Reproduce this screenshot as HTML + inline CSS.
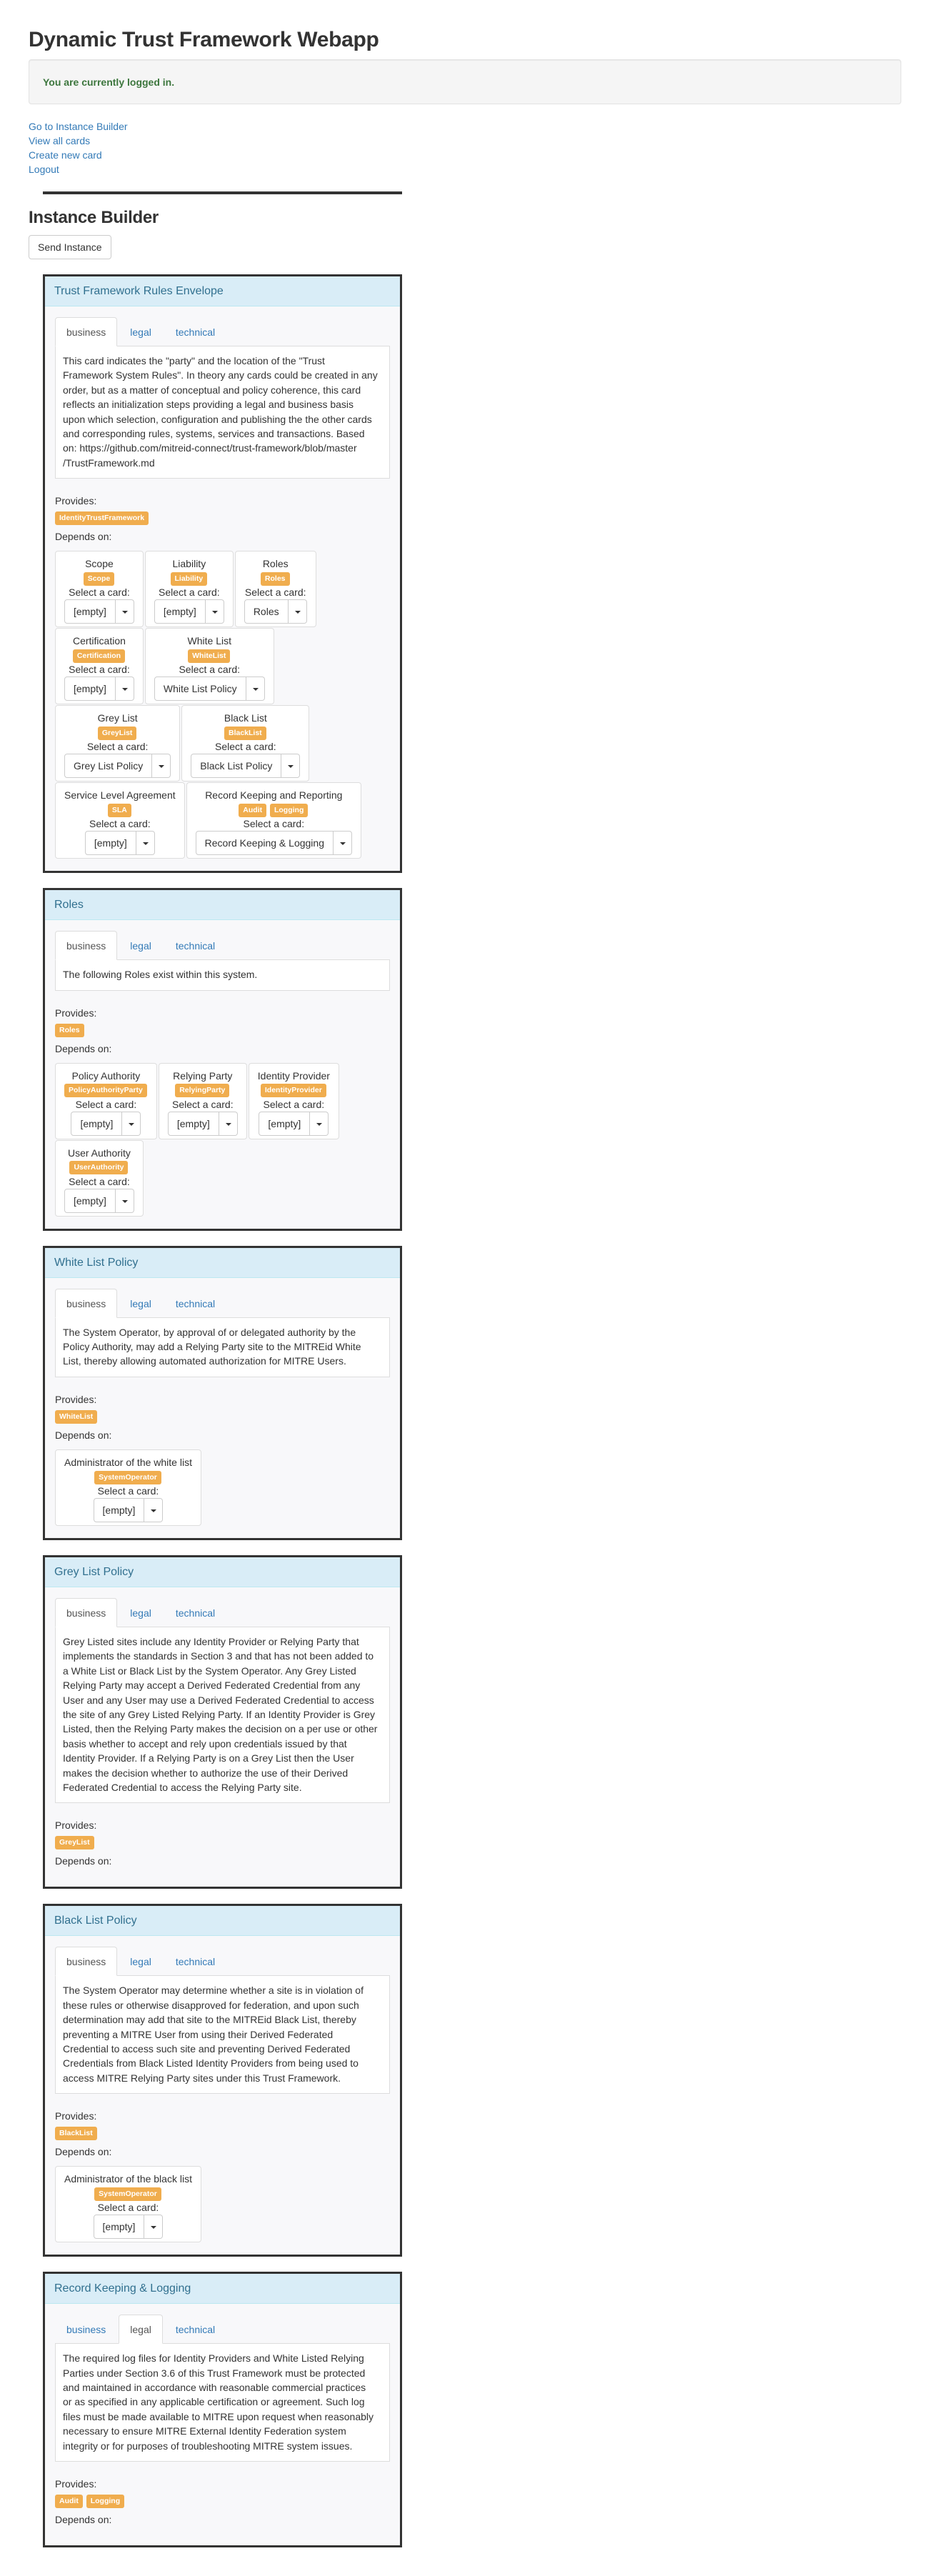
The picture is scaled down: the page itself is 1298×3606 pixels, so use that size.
<!DOCTYPE html>
<html><head><meta charset="utf-8">
<style>
*{box-sizing:border-box;}
html,body{margin:0;padding:0;background:#fff;}
body{font-family:"Liberation Sans",Arial,sans-serif;font-size:14px;line-height:20px;color:#333;width:1298px;height:3567px;overflow:hidden;}
.wrap{padding-left:40px;padding-right:36px;}
h1{font-size:30px;font-weight:bold;line-height:33px;margin:39px 0 11px;color:#333;letter-spacing:-0.3px;}
.well{background:#f5f5f5;border:1px solid #e3e3e3;border-radius:4px;height:63px;padding:21px 19px;box-shadow:inset 0 1px 1px rgba(0,0,0,.05);}
.well b{color:#3c763d;}
.links{margin-top:21px;}
.links a{display:block;color:#337ab7;text-decoration:none;line-height:20px;}
.hr{margin:21px 0 0 20px;width:503px;height:4px;background:#333;}
h3{font-size:24px;font-weight:bold;line-height:26px;margin:20px 0 11px;letter-spacing:-0.3px;}
.btn{display:inline-block;height:34px;border:1px solid #ccc;border-radius:4px;background:#fff;padding:6px 12px;line-height:20px;color:#333;font-size:14px;}
.panel{margin:21px 0 0 20px;width:503px;border:3px solid #333;background:#f8f8fa;}
.ph{background:#d9edf7;border-bottom:1px solid #bce8f1;height:42px;padding:12px 13px;color:#31708f;font-size:16px;line-height:18px;}
.pb{padding:15px 14px 16px 14px;}
.tabs{height:41px;border-bottom:1px solid #ddd;display:flex;}
.tabs span{display:block;height:41px;padding:10px 15px;margin-right:2px;color:#337ab7;border:1px solid transparent;border-radius:4px 4px 0 0;}
.tabs span.on{background:#fff;border-color:#ddd #ddd transparent;color:#555;}
.tc{background:#fff;border:1px solid #ddd;border-top:none;padding:10px 10px 11px 10px;white-space:nowrap;margin-bottom:21px;line-height:20.4px;}
.lbl{display:inline-block;background:#f0ad4e;color:#fff;font-weight:bold;font-size:10.5px;line-height:11px;padding:4px 6px 4px;border-radius:3px;margin-right:1px;}
.labels{height:23px;padding-top:2px;}
.dep{margin-top:7px;}
.deps{margin-top:10px;}
.row{display:flex;gap:2px;margin-bottom:1px;}
.box{background:#fff;border:1px solid #ddd;border-radius:4px;padding:7px 12px 6px;text-align:center;white-space:nowrap;height:107px;}
.box .t{line-height:20px;}
.box .l{height:20px;line-height:20px;}
.box .l .lbl{vertical-align:middle;}
.bg{display:inline-flex;height:34px;margin-top:0;}
.bg .a{border:1px solid #ccc;border-radius:4px 0 0 4px;padding:6px 12px;background:#fff;line-height:20px;}
.bg .c{border:1px solid #ccc;border-left:none;border-radius:0 4px 4px 0;width:26px;background:#fff;position:relative;}
.bg .c:after{content:"";position:absolute;left:9px;top:15px;border-top:4px solid #333;border-left:4px solid transparent;border-right:4px solid transparent;}
</style></head><body>
<div class="wrap">
<h1>Dynamic Trust Framework Webapp</h1>
<div class="well"><b>You are currently logged in.</b></div>
<div class="links">
<a>Go to Instance Builder</a><a>View all cards</a><a>Create new card</a><a>Logout</a>
</div>
<div class="hr"></div>
<h3>Instance Builder</h3>
<span class="btn">Send Instance</span>

<div class="panel">
<div class="ph">Trust Framework Rules Envelope</div>
<div class="pb">
<div class="tabs"><span class="on">business</span><span>legal</span><span>technical</span></div>
<div class="tc">This card indicates the "party" and the location of the "Trust<br>Framework System Rules". In theory any cards could be created in any<br>order, but as a matter of conceptual and policy coherence, this card<br>reflects an initialization steps providing a legal and business basis<br>upon which selection, configuration and publishing the the other cards<br>and corresponding rules, systems, services and transactions. Based<br>on: https://github.com/mitreid-connect/trust-framework/blob/master<br>/TrustFramework.md</div>
<div>Provides:</div>
<div class="labels"><span class="lbl">IdentityTrustFramework</span></div>
<div class="dep">Depends on:</div>
<div class="deps">
<div class="row">
<div class="box"><div class="t">Scope</div><div class="l"><span class="lbl">Scope</span></div><div class="t">Select a card:</div><div class="bg"><span class="a">[empty]</span><span class="c"></span></div></div>
<div class="box"><div class="t">Liability</div><div class="l"><span class="lbl">Liability</span></div><div class="t">Select a card:</div><div class="bg"><span class="a">[empty]</span><span class="c"></span></div></div>
<div class="box"><div class="t">Roles</div><div class="l"><span class="lbl">Roles</span></div><div class="t">Select a card:</div><div class="bg"><span class="a">Roles</span><span class="c"></span></div></div>
</div>
<div class="row">
<div class="box"><div class="t">Certification</div><div class="l"><span class="lbl">Certification</span></div><div class="t">Select a card:</div><div class="bg"><span class="a">[empty]</span><span class="c"></span></div></div>
<div class="box"><div class="t">White List</div><div class="l"><span class="lbl">WhiteList</span></div><div class="t">Select a card:</div><div class="bg"><span class="a">White List Policy</span><span class="c"></span></div></div>
</div>
<div class="row">
<div class="box"><div class="t">Grey List</div><div class="l"><span class="lbl">GreyList</span></div><div class="t">Select a card:</div><div class="bg"><span class="a">Grey List Policy</span><span class="c"></span></div></div>
<div class="box"><div class="t">Black List</div><div class="l"><span class="lbl">BlackList</span></div><div class="t">Select a card:</div><div class="bg"><span class="a">Black List Policy</span><span class="c"></span></div></div>
</div>
<div class="row">
<div class="box"><div class="t">Service Level Agreement</div><div class="l"><span class="lbl">SLA</span></div><div class="t">Select a card:</div><div class="bg"><span class="a">[empty]</span><span class="c"></span></div></div>
<div class="box"><div class="t">Record Keeping and Reporting</div><div class="l"><span class="lbl">Audit</span> <span class="lbl">Logging</span></div><div class="t">Select a card:</div><div class="bg"><span class="a">Record Keeping &amp; Logging</span><span class="c"></span></div></div>
</div>
</div>
</div>
</div>

<div class="panel">
<div class="ph">Roles</div>
<div class="pb">
<div class="tabs"><span class="on">business</span><span>legal</span><span>technical</span></div>
<div class="tc">The following Roles exist within this system.</div>
<div>Provides:</div>
<div class="labels"><span class="lbl">Roles</span></div>
<div class="dep">Depends on:</div>
<div class="deps">
<div class="row">
<div class="box"><div class="t">Policy Authority</div><div class="l"><span class="lbl">PolicyAuthorityParty</span></div><div class="t">Select a card:</div><div class="bg"><span class="a">[empty]</span><span class="c"></span></div></div>
<div class="box"><div class="t">Relying Party</div><div class="l"><span class="lbl">RelyingParty</span></div><div class="t">Select a card:</div><div class="bg"><span class="a">[empty]</span><span class="c"></span></div></div>
<div class="box"><div class="t">Identity Provider</div><div class="l"><span class="lbl">IdentityProvider</span></div><div class="t">Select a card:</div><div class="bg"><span class="a">[empty]</span><span class="c"></span></div></div>
</div>
<div class="row">
<div class="box"><div class="t">User Authority</div><div class="l"><span class="lbl">UserAuthority</span></div><div class="t">Select a card:</div><div class="bg"><span class="a">[empty]</span><span class="c"></span></div></div>
</div>
</div>
</div>
</div>

<div class="panel">
<div class="ph">White List Policy</div>
<div class="pb">
<div class="tabs"><span class="on">business</span><span>legal</span><span>technical</span></div>
<div class="tc">The System Operator, by approval of or delegated authority by the<br>Policy Authority, may add a Relying Party site to the MITREid White<br>List, thereby allowing automated authorization for MITRE Users.</div>
<div>Provides:</div>
<div class="labels"><span class="lbl">WhiteList</span></div>
<div class="dep">Depends on:</div>
<div class="deps">
<div class="row">
<div class="box"><div class="t">Administrator of the white list</div><div class="l"><span class="lbl">SystemOperator</span></div><div class="t">Select a card:</div><div class="bg"><span class="a">[empty]</span><span class="c"></span></div></div>
</div>
</div>
</div>
</div>

<div class="panel">
<div class="ph">Grey List Policy</div>
<div class="pb">
<div class="tabs"><span class="on">business</span><span>legal</span><span>technical</span></div>
<div class="tc">Grey Listed sites include any Identity Provider or Relying Party that<br>implements the standards in Section 3 and that has not been added to<br>a White List or Black List by the System Operator. Any Grey Listed<br>Relying Party may accept a Derived Federated Credential from any<br>User and any User may use a Derived Federated Credential to access<br>the site of any Grey Listed Relying Party. If an Identity Provider is Grey<br>Listed, then the Relying Party makes the decision on a per use or other<br>basis whether to accept and rely upon credentials issued by that<br>Identity Provider. If a Relying Party is on a Grey List then the User<br>makes the decision whether to authorize the use of their Derived<br>Federated Credential to access the Relying Party site.</div>
<div>Provides:</div>
<div class="labels"><span class="lbl">GreyList</span></div>
<div class="dep">Depends on:</div>
<div class="deps"></div>
</div>
</div>

<div class="panel">
<div class="ph">Black List Policy</div>
<div class="pb">
<div class="tabs"><span class="on">business</span><span>legal</span><span>technical</span></div>
<div class="tc">The System Operator may determine whether a site is in violation of<br>these rules or otherwise disapproved for federation, and upon such<br>determination may add that site to the MITREid Black List, thereby<br>preventing a MITRE User from using their Derived Federated<br>Credential to access such site and preventing Derived Federated<br>Credentials from Black Listed Identity Providers from being used to<br>access MITRE Relying Party sites under this Trust Framework.</div>
<div>Provides:</div>
<div class="labels"><span class="lbl">BlackList</span></div>
<div class="dep">Depends on:</div>
<div class="deps">
<div class="row">
<div class="box"><div class="t">Administrator of the black list</div><div class="l"><span class="lbl">SystemOperator</span></div><div class="t">Select a card:</div><div class="bg"><span class="a">[empty]</span><span class="c"></span></div></div>
</div>
</div>
</div>
</div>

<div class="panel">
<div class="ph">Record Keeping &amp; Logging</div>
<div class="pb">
<div class="tabs"><span>business</span><span class="on">legal</span><span>technical</span></div>
<div class="tc">The required log files for Identity Providers and White Listed Relying<br>Parties under Section 3.6 of this Trust Framework must be protected<br>and maintained in accordance with reasonable commercial practices<br>or as specified in any applicable certification or agreement. Such log<br>files must be made available to MITRE upon request when reasonably<br>necessary to ensure MITRE External Identity Federation system<br>integrity or for purposes of troubleshooting MITRE system issues.</div>
<div>Provides:</div>
<div class="labels"><span class="lbl">Audit</span> <span class="lbl">Logging</span></div>
<div class="dep">Depends on:</div>
<div class="deps"></div>
</div>
</div>

</div>
</body></html>
